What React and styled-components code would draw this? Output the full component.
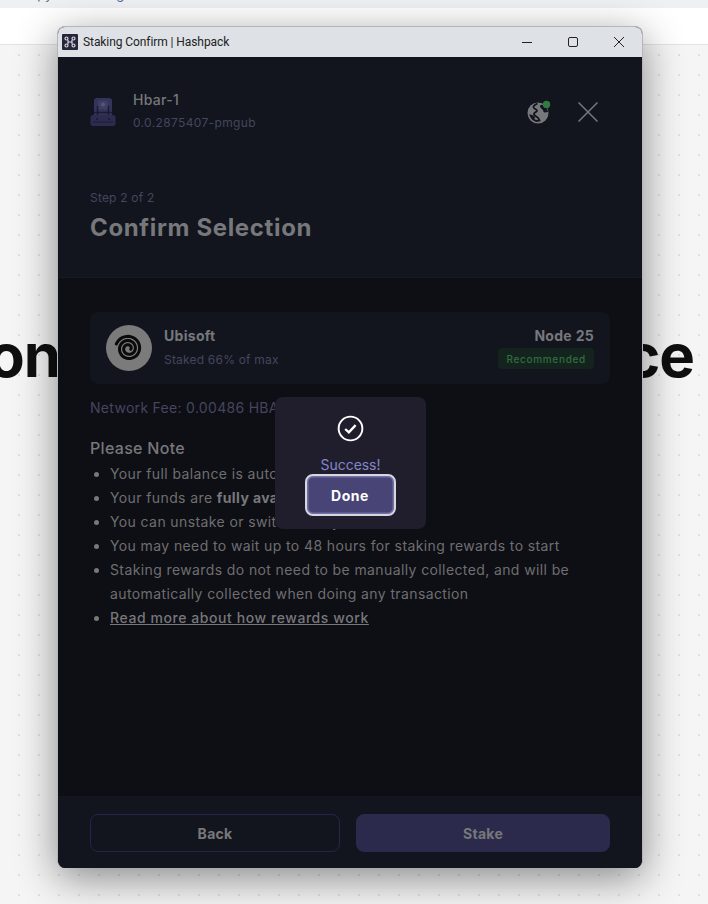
import React from "react";
import styled, { createGlobalStyle } from "styled-components";

const GlobalStyle = createGlobalStyle`
  html, body {
    margin: 0;
    padding: 0;
    height: 100%;
    overflow: hidden;
    background: #f5f5f5;
  }
`;

const Page = styled.div`
  position: relative;
  width: 708px;
  height: 904px;
  overflow: hidden;
  font-family: Inter, "Liberation Sans", sans-serif;
  background-color: #f5f5f5;
`;

const TopStrip = styled.div`
  height: 8px;
  overflow: hidden;
  display: flex;
  gap: 26px;
  padding-left: 20px;
  background: #eff0f2;
  font-size: 13px;
  line-height: 16px;
  color: #44669f;
  span {
    margin-top: -14px;
  }
`;

const NavBar = styled.div`
  height: 36px;
  background: #fff;
  border-bottom: 1px solid #e3e3e3;
`;

const Canvas = styled.div`
  height: 859px;
  background-image: radial-gradient(circle, #e0e0e0 0.9px, transparent 1.1px);
  background-size: 20px 20px;
  background-position: 9px 0;
`;

const Headline = styled.h1`
  margin: 0 0 0 -12px;
  padding-top: 276px;
  display: flex;
  justify-content: space-between;
  width: 706px;
  font-size: 60px;
  line-height: 68px;
  font-weight: 700;
  letter-spacing: -1px;
  color: #0f0f0f;
`;

const Window = styled.div`
  position: absolute;
  left: 57px;
  top: 26px;
  width: 586px;
  height: 842px;
  box-sizing: border-box;
  display: flex;
  flex-direction: column;
  border-radius: 8px;
  border: 1px solid #b4b6ba;
  border-bottom: none;
  overflow: hidden;
  background: #12151e;
  box-shadow: 0 10px 40px rgba(0, 0, 0, 0.45);
`;

const TitleBar = styled.div`
  flex: 0 0 30px;
  display: flex;
  align-items: center;
  background: #dee1e6;
  padding-left: 4px;
`;

const AppBadge = styled.div`
  width: 16px;
  height: 16px;
  background: #26263a;
  border-radius: 1px;
  display: flex;
  align-items: center;
  justify-content: center;
`;

const TitleText = styled.span`
  margin-left: 5px;
  flex: 1;
  font-family: Roboto, "Liberation Sans", sans-serif;
  font-size: 12px;
  letter-spacing: -0.08px;
  color: #222;
`;

const WinButton = styled.div`
  width: 46px;
  height: 30px;
  display: flex;
  align-items: center;
  justify-content: center;
`;

const Header = styled.header`
  flex: 0 0 221px;
  box-sizing: border-box;
  padding: 31px 32px 0;
  display: flex;
  flex-direction: column;
  background: #12151e;
  border-bottom: 1px solid #171a22;
`;

const AccountRow = styled.div`
  display: flex;
  align-items: center;
  height: 48px;
`;

const AccountIcon = styled.div`
  width: 43px;
  display: flex;
`;

const AccountInfo = styled.div`
  flex: 1;
  display: flex;
  flex-direction: column;
  gap: 6px;
  padding-bottom: 2px;
`;

const AccountName = styled.span`
  font-size: 14px;
  line-height: 18px;
  font-weight: 500;
  letter-spacing: 0.3px;
  color: #77787b;
`;

const AccountId = styled.span`
  font-size: 12px;
  line-height: 16px;
  letter-spacing: 0.35px;
  color: #44465f;
`;

const HeaderIcons = styled.div`
  display: flex;
  align-items: center;
  gap: 27px;
  padding-right: 12px;
`;

const StepLabel = styled.div`
  margin-top: 54px;
  font-size: 12px;
  line-height: 16px;
  letter-spacing: 0.2px;
  color: #44465f;
`;

const Title = styled.h2`
  margin: 7px 0 0;
  font-size: 24px;
  line-height: 30px;
  font-weight: 700;
  letter-spacing: 0.65px;
  color: #77787b;
`;

const Body = styled.main`
  flex: 1;
  box-sizing: border-box;
  padding: 34px 32px 0;
  background: #0e0e15;
`;

const NodeCard = styled.div`
  height: 72px;
  box-sizing: border-box;
  padding: 0 16px;
  display: flex;
  align-items: center;
  gap: 12px;
  border-radius: 8px;
  background: #12151e;
`;

const NodeText = styled.div`
  flex: 1;
  display: flex;
  flex-direction: column;
  gap: 6px;
`;

const NodeName = styled.span`
  font-size: 14px;
  line-height: 18px;
  font-weight: 700;
  letter-spacing: 0.3px;
  color: #77787b;
`;

const NodeStake = styled.span`
  font-size: 12px;
  line-height: 18px;
  letter-spacing: 0.2px;
  color: #44465f;
`;

const NodeSide = styled.div`
  display: flex;
  flex-direction: column;
  align-items: flex-end;
  gap: 3px;
`;

const Recommended = styled.span`
  height: 21px;
  box-sizing: border-box;
  padding: 0 8px;
  display: flex;
  align-items: center;
  border-radius: 4px;
  background: #15231e;
  color: #2f6f3c;
  font-size: 10px;
  font-weight: 500;
  letter-spacing: 0.7px;
`;

const Fee = styled.div`
  margin-top: 14px;
  font-size: 14px;
  line-height: 20px;
  letter-spacing: 0.3px;
  color: #44465f;
`;

const NoteTitle = styled.h3`
  margin: 19px 0 3px;
  font-size: 16px;
  line-height: 22px;
  font-weight: 500;
  letter-spacing: 0.3px;
  color: #77787b;
`;

const NoteList = styled.ul`
  margin: 0;
  padding: 0 0 0 20px;
  font-size: 14px;
  line-height: 24px;
  letter-spacing: 0.39px;
  color: #6e6e70;
  li::marker {
    color: #77787b;
  }
  b {
    font-weight: 700;
    color: #77787b;
  }
`;

const NoteLink = styled.a`
  color: #77787b;
  font-weight: 500;
  letter-spacing: 0.57px;
  text-decoration: underline;
`;

const Footer = styled.footer`
  flex: 0 0 72px;
  box-sizing: border-box;
  padding: 17px 32px 16px;
  display: flex;
  gap: 16px;
  background: #13151e;
  border-top: 1px solid #15141f;
`;

const FooterButton = styled.button`
  flex: ${(p) => (p.$filled ? 254 : 250)} 1 0;
  font-family: inherit;
  font-size: 14px;
  font-weight: 700;
  letter-spacing: 0.3px;
  color: #77787b;
  border-radius: 8px;
  border: 1px solid ${(p) => (p.$filled ? "#2b2a4c" : "#25254a")};
  background: ${(p) => (p.$filled ? "#2b2a4c" : "transparent")};
`;

const Modal = styled.div`
  position: absolute;
  left: 275px;
  top: 397px;
  width: 151px;
  height: 132px;
  box-sizing: border-box;
  padding-top: 18px;
  display: flex;
  flex-direction: column;
  align-items: center;
  border-radius: 8px;
  background: #201e2c;
`;

const CheckIcon = styled.svg`
  width: 27px;
  height: 27px;
  margin-right: 1px;
`;

const SuccessText = styled.div`
  margin-top: 14px;
  font-size: 14px;
  line-height: 17px;
  letter-spacing: -0.05px;
  color: #8385cc;
`;

const DoneButton = styled.button`
  width: 91px;
  height: 42px;
  margin: 1px 1px 0 0;
  font-family: inherit;
  font-size: 14px;
  font-weight: 700;
  letter-spacing: 0.55px;
  color: #fff;
  border-radius: 8px;
  border: 2px solid #d6d6e0;
  background: #484576;
  box-shadow: inset 0 0 0 1.5px #7370a8;
`;

// logo spiral, outer end at the lower left, winding in clockwise
const spiralPath = () => {
  const pts = [];
  for (let i = 0; i <= 90; i++) {
    const t = i / 90;
    const a = ((200 + t * 900) * Math.PI) / 180;
    const r = 13 - t * 10.6;
    pts.push(`${(22.500 + r * Math.cos(a)).toFixed(2)} ${(23.500 + r * Math.sin(a)).toFixed(2)}`);
  }
  return "M" + pts.join("L");
};

const Backpack = () => (
  <svg width="26" height="30" viewBox="0 0 26 30">
    <rect x="4" y="1" width="18" height="27" rx="3" fill="#34335a" />
    <rect x="0.500" y="18" width="25" height="11" rx="2.500" fill="#2d2c50" />
    <rect x="8" y="3.500" width="10" height="9" rx="1.500" fill="#3d3e62" />
    <circle cx="13" cy="7.500" r="2" fill="#55567a" />
    <path d="M4 15.500h18" stroke="#1c1b33" strokeWidth="1.500" />
    <path d="M7.500 9v9M18.500 9v9" stroke="#1c1b33" strokeWidth="1.500" />
    <path d="M3 25h20" stroke="#1c1b33" strokeWidth="1" />
    <circle cx="7" cy="22" r="0.900" fill="#1c1b33" />
    <circle cx="19" cy="22" r="0.900" fill="#1c1b33" />
  </svg>
);

const Globe = () => (
  <svg width="24" height="24" viewBox="0 0 24 24">
    <circle cx="11" cy="13" r="10.500" fill="#77787b" />
    <path
      d="M10.500 3.500C8 5 6 5.500 6.500 7.500c.5 1.500 3 1.500 3.500 3 .5 1.500-2.500 1.500-3 3-.5 1.300 1 2.500 3 3.500 1.500.8 2 2 2.500 3.500L9 21c-2.500-1-4.500-3-5.500-5.500 2 .3 3 1.500 4 3"
      fill="none"
      stroke="#12151e"
      strokeWidth="1.800"
    />
    <path d="M13 5.500c2-1.500 5-.5 6.500 1.500l1.500 5-3.500.5c-1.500-.5-1-2-2-3-1.200-1-3-2.500-2.500-4z" fill="#12151e" />
    <circle cx="19.500" cy="4.500" r="3.700" fill="#2f7b41" />
  </svg>
);

const Ubisoft = () => (
  <svg width="46" height="46" viewBox="0 0 46 46">
    <circle cx="23" cy="23" r="23" fill="#7b7b7b" />
    <path d={spiralPath()} fill="none" stroke="#0a0a0a" strokeWidth="3" strokeLinecap="round" />
  </svg>
);

export default function App() {
  return (
    <Page>
      <GlobalStyle />
      <TopStrip>
        <span>Copy</span>
        <span>Staking</span>
      </TopStrip>
      <NavBar />
      <Canvas>
        <Headline>
          <span>on</span>
          <span>ce</span>
        </Headline>
      </Canvas>

      <Window>
        <TitleBar>
          <AppBadge>
            <svg width="12" height="12" viewBox="0 0 12 12" fill="none" stroke="#d8d8e4" strokeWidth="1.200">
              <rect x="1" y="1" width="3" height="3" rx="1.500" />
              <rect x="8" y="1" width="3" height="3" rx="1.500" />
              <rect x="1" y="8" width="3" height="3" rx="1.500" />
              <rect x="8" y="8" width="3" height="3" rx="1.500" />
              <path d="M4 4v4M8 4v4M4 6h4" />
            </svg>
          </AppBadge>
          <TitleText>Staking Confirm | Hashpack</TitleText>
          <WinButton>
            <svg width="12" height="12" viewBox="0 0 12 12">
              <path d="M1 6.500h10" stroke="#222" strokeWidth="1" />
            </svg>
          </WinButton>
          <WinButton>
            <svg width="12" height="12" viewBox="0 0 12 12" fill="none">
              <rect x="1.500" y="1.500" width="9" height="9" rx="1.500" stroke="#222" />
            </svg>
          </WinButton>
          <WinButton>
            <svg width="12" height="12" viewBox="0 0 12 12">
              <path d="M1 1l10 10M11 1L1 11" stroke="#222" strokeWidth="1" />
            </svg>
          </WinButton>
        </TitleBar>

        <Header>
          <AccountRow>
            <AccountIcon>
              <Backpack />
            </AccountIcon>
            <AccountInfo>
              <AccountName>Hbar-1</AccountName>
              <AccountId>0.0.2875407-pmgub</AccountId>
            </AccountInfo>
            <HeaderIcons>
              <Globe />
              <svg width="20" height="20" viewBox="0 0 20 20">
                <path d="M.5.5l19 19M19.500.5l-19 19" stroke="#77787b" strokeWidth="1.500" />
              </svg>
            </HeaderIcons>
          </AccountRow>
          <StepLabel>Step 2 of 2</StepLabel>
          <Title>Confirm Selection</Title>
        </Header>

        <Body>
          <NodeCard>
            <Ubisoft />
            <NodeText>
              <NodeName>Ubisoft</NodeName>
              <NodeStake>Staked 66% of max</NodeStake>
            </NodeText>
            <NodeSide>
              <NodeName>Node 25</NodeName>
              <Recommended>Recommended</Recommended>
            </NodeSide>
          </NodeCard>
          <Fee>Network Fee: 0.00486 HBAR</Fee>
          <NoteTitle>Please Note</NoteTitle>
          <NoteList>
            <li>Your full balance is automatically staked</li>
            <li>
              Your funds are <b>fully available</b> while staked
            </li>
            <li>You can unstake or switch at any time</li>
            <li>You may need to wait up to 48 hours for staking rewards to start</li>
            <li>
              Staking rewards do not need to be manually collected, and will be automatically
              collected when doing any transaction
            </li>
            <li>
              <NoteLink>Read more about how rewards work</NoteLink>
            </li>
          </NoteList>
        </Body>

        <Footer>
          <FooterButton>Back</FooterButton>
          <FooterButton $filled>Stake</FooterButton>
        </Footer>
      </Window>

      <Modal>
        <CheckIcon viewBox="0 0 28 28" fill="none" stroke="#fff">
          <circle cx="14" cy="14" r="12.300" strokeWidth="2" />
          <path d="M8.500 14.500l3.800 3.500 7-7.500" strokeWidth="2.400" />
        </CheckIcon>
        <SuccessText>Success!</SuccessText>
        <DoneButton>Done</DoneButton>
      </Modal>
    </Page>
  );
}
